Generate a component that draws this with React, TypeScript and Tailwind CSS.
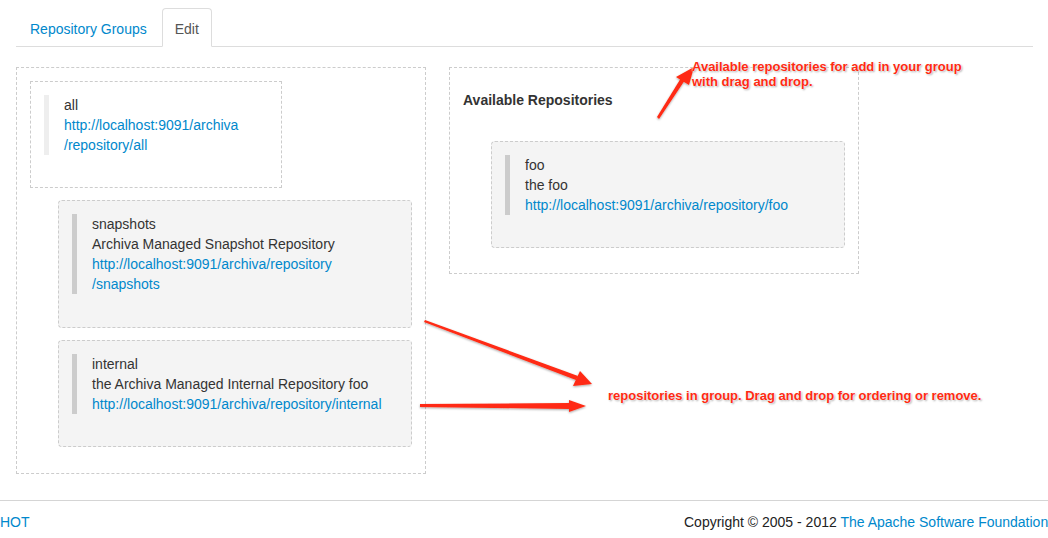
import React from "react";

const link = "text-[#0088cc]";

function Quote({ lines, light }: { lines: { t: string; link?: boolean }[]; light?: boolean }) {
  return (
    <div className={`border-l-[5px] pl-[15px] ${light ? "border-[#eeeeee]" : "border-[#cccccc]"}`}>
      {lines.map((l, i) => (
        <div key={i} className={l.link ? link : "text-[#333]"}>
          {l.t}
        </div>
      ))}
    </div>
  );
}

export default function App() {
  return (
    <div className="relative w-[1048px] h-[538px] overflow-hidden bg-white font-['Liberation_Sans',Arial,sans-serif] text-[14px] leading-[20px] text-[#333] flex flex-col">
      <div className="pl-4 pr-[15px] pt-2">
        {/* tabs */}
        <ul className="flex border-b border-[#dddddd]">
          <li className="-mb-px mr-[2px]">
            <a className="block pl-[13px] pr-[12px] pt-[10px] pb-[7px] border border-transparent text-[#0088cc]">
              Repository Groups
            </a>
          </li>
          <li className="-mb-px">
            <a className="block px-3 pt-[10px] pb-[7px] border border-[#dddddd] border-b-white bg-white rounded-t-[4px] text-[#555]">
              Edit
            </a>
          </li>
        </ul>

        {/* panels */}
        <div className="flex items-start gap-[23px] mt-5">
          <div className="w-[410px] h-[407px] border border-dashed border-[#cccccc] pt-[13px] px-[13px]">
            <div className="w-[252px] border border-dashed border-[#cccccc] px-[13px] pt-[13px] pb-[12px]">
              <div className="mb-5">
                <Quote
                  light
                  lines={[
                    { t: "all" },
                    { t: "http://localhost:9091/archiva", link: true },
                    { t: "/repository/all", link: true },
                  ]}
                />
              </div>
            </div>
            <div className="ml-[28px] mt-[12px] border border-dashed border-[#cccccc] rounded-[4px] bg-[#f4f4f4] px-[13px] pt-[13px] pb-[13px]">
              <div className="mb-5">
                <Quote
                  lines={[
                    { t: "snapshots" },
                    { t: "Archiva Managed Snapshot Repository" },
                    { t: "http://localhost:9091/archiva/repository", link: true },
                    { t: "/snapshots", link: true },
                  ]}
                />
              </div>
            </div>
            <div className="ml-[28px] mt-[12px] border border-dashed border-[#cccccc] rounded-[4px] bg-[#f4f4f4] px-[13px] pt-[13px] pb-[12px]">
              <div className="mb-5">
                <Quote
                  lines={[
                    { t: "internal" },
                    { t: "the Archiva Managed Internal Repository foo" },
                    { t: "http://localhost:9091/archiva/repository/internal", link: true },
                  ]}
                />
              </div>
            </div>
          </div>

          <div className="w-[410px] h-[207px] border border-dashed border-[#cccccc] pt-[22px] px-[13px]">
            <div className="font-bold text-[#333]">Available Repositories</div>
            <div className="ml-[28px] mt-[31px] border border-dashed border-[#cccccc] rounded-[4px] bg-[#f4f4f4] px-[13px] pt-[13px] pb-[12px]">
              <div className="mb-5">
                <Quote
                  lines={[
                    { t: "foo" },
                    { t: "the foo" },
                    { t: "http://localhost:9091/archiva/repository/foo", link: true },
                  ]}
                />
              </div>
            </div>
          </div>
        </div>
      </div>

      {/* footer */}
      <div className="mt-[26px] border-t border-[#d5d5d5] pt-[11px] grid grid-cols-[684px_1fr] whitespace-nowrap">
        <div className={link}>HOT</div>
        <div className="text-[#222]">
          Copyright © 2005 - 2012 <span className={link}>The Apache Software Foundation</span>
        </div>
      </div>

      {/* annotations */}
      <svg className="absolute left-0 top-0 pointer-events-none" width="1048" height="538" viewBox="0 0 1048 538">
        <defs>
          <filter id="sh" x="-20%" y="-20%" width="140%" height="140%">
            <feDropShadow dx="0" dy="1" stdDeviation="1" floodColor="#000" floodOpacity="0.35" />
          </filter>
        </defs>
        <g fill="#ff2a12" stroke="none" filter="url(#sh)">
          <polygon points="657,117 659,119 685,80 681,78" />
          <polygon points="694,67 676,77 689,85" />
          <polygon points="424,322 425,320 578,376 576,380" />
          <polygon points="592,384 573,386 580,371" />
          <polygon points="420,404 420,407 571,409 571,403" />
          <polygon points="586,406 569,400 569,412" />
        </g>
      </svg>
      <div className="absolute left-[692px] top-[59px] text-[13px] leading-[15px] font-bold text-[#ff2a12] whitespace-nowrap [text-shadow:0_0_2px_#fff,0_0_2px_#fff,1px_1px_2px_rgba(0,0,0,0.4)]">
        <div>Available repositories for add in your group</div>
        <div>with drag and drop.</div>
      </div>
      <div className="absolute left-[608px] top-[388px] text-[13px] leading-[15px] font-bold text-[#ff2a12] whitespace-nowrap [text-shadow:0_0_2px_#fff,0_0_2px_#fff,1px_1px_2px_rgba(0,0,0,0.4)]">
        repositories in group. Drag and drop for ordering or remove.
      </div>
    </div>
  );
}
